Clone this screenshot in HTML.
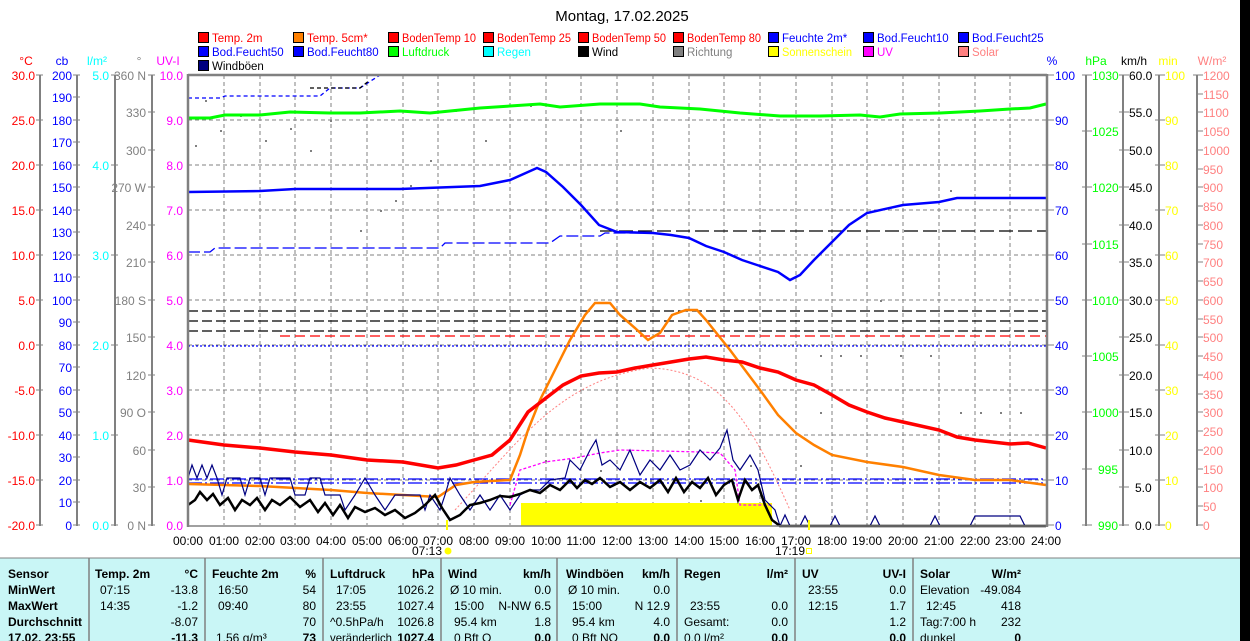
<!DOCTYPE html>
<html><head><meta charset="utf-8"><style>
html,body{margin:0;padding:0;background:#fff;width:1250px;height:641px;overflow:hidden;font-family:"Liberation Sans",Arial,sans-serif}
svg{position:absolute;left:0;top:0}
</style></head><body>
<svg width="1250" height="641" font-family="Liberation Sans, Arial, sans-serif" font-size="12">
<rect x="1240" y="0" width="10" height="641" fill="#000"/>
<text x="622" y="21" font-size="15" text-anchor="middle" fill="#000">Montag, 17.02.2025</text>
<!-- legend -->
<g font-size="11.5" textLength="0">
<rect x="198.5" y="32.5" width="10" height="10" fill="#f00" stroke="#000"/><text x="212" y="42" fill="#f00">Temp. 2m</text>
<rect x="293.5" y="32.5" width="10" height="10" fill="#ff8000" stroke="#000"/><text x="307" y="42" fill="#f00">Temp. 5cm*</text>
<rect x="388.5" y="32.5" width="10" height="10" fill="#f00" stroke="#000"/><text x="402" y="42" fill="#f00" textLength="74" lengthAdjust="spacingAndGlyphs">BodenTemp 10</text>
<rect x="483.5" y="32.5" width="10" height="10" fill="#f00" stroke="#000"/><text x="497" y="42" fill="#f00" textLength="74" lengthAdjust="spacingAndGlyphs">BodenTemp 25</text>
<rect x="578.5" y="32.5" width="10" height="10" fill="#f00" stroke="#000"/><text x="592" y="42" fill="#f00" textLength="74" lengthAdjust="spacingAndGlyphs">BodenTemp 50</text>
<rect x="673.5" y="32.5" width="10" height="10" fill="#f00" stroke="#000"/><text x="687" y="42" fill="#f00" textLength="74" lengthAdjust="spacingAndGlyphs">BodenTemp 80</text>
<rect x="768.5" y="32.5" width="10" height="10" fill="#00f" stroke="#000"/><text x="782" y="42" fill="#00f">Feuchte 2m*</text>
<rect x="863.5" y="32.5" width="10" height="10" fill="#00f" stroke="#000"/><text x="877" y="42" fill="#00f">Bod.Feucht10</text>
<rect x="958.5" y="32.5" width="10" height="10" fill="#00f" stroke="#000"/><text x="972" y="42" fill="#00f">Bod.Feucht25</text>
<rect x="198.5" y="46.5" width="10" height="10" fill="#00f" stroke="#000"/><text x="212" y="56" fill="#00f">Bod.Feucht50</text>
<rect x="293.5" y="46.5" width="10" height="10" fill="#00f" stroke="#000"/><text x="307" y="56" fill="#00f">Bod.Feucht80</text>
<rect x="388.5" y="46.5" width="10" height="10" fill="#0f0" stroke="#000"/><text x="402" y="56" fill="#0f0">Luftdruck</text>
<rect x="483.5" y="46.5" width="10" height="10" fill="#0ff" stroke="#000"/><text x="497" y="56" fill="#0ff">Regen</text>
<rect x="578.5" y="46.5" width="10" height="10" fill="#000" stroke="#000"/><text x="592" y="56" fill="#000">Wind</text>
<rect x="673.5" y="46.5" width="10" height="10" fill="#808080" stroke="#000"/><text x="687" y="56" fill="#808080">Richtung</text>
<rect x="768.5" y="46.5" width="10" height="10" fill="#ff0" stroke="#000"/><text x="782" y="56" fill="#ff0" textLength="70" lengthAdjust="spacingAndGlyphs">Sonnenschein</text>
<rect x="863.5" y="46.5" width="10" height="10" fill="#f0f" stroke="#000"/><text x="877" y="56" fill="#f0f">UV</text>
<rect x="958.5" y="46.5" width="10" height="10" fill="#ff8080" stroke="#000"/><text x="972" y="56" fill="#ff8080">Solar</text>
<rect x="198.5" y="60.5" width="10" height="10" fill="#000080" stroke="#000"/><text x="212" y="70" fill="#000">Windböen</text>
</g>
<!-- unit labels -->
<g font-size="12">
<text x="26" y="65" text-anchor="middle" fill="#f00">°C</text>
<text x="62" y="65" text-anchor="middle" fill="#00f">cb</text>
<text x="97" y="65" text-anchor="middle" fill="#0ff">l/m²</text>
<text x="139" y="65" text-anchor="middle" fill="#808080">°</text>
<text x="168" y="65" text-anchor="middle" fill="#f0f">UV-I</text>
<text x="1052" y="65" text-anchor="middle" fill="#00f">%</text>
<text x="1096" y="65" text-anchor="middle" fill="#0f0">hPa</text>
<text x="1134" y="65" text-anchor="middle" fill="#000">km/h</text>
<text x="1168" y="65" text-anchor="middle" fill="#ff0">min</text>
<text x="1212" y="65" text-anchor="middle" fill="#ff8080">W/m²</text>
</g>
<!-- axis lines -->
<g stroke="#808080" stroke-width="2">
<line x1="40" y1="75" x2="40" y2="526"/><line x1="77" y1="75" x2="77" y2="526"/><line x1="115" y1="75" x2="115" y2="526"/><line x1="152" y1="75" x2="152" y2="526"/>
<line x1="1086" y1="75" x2="1086" y2="526"/><line x1="1123" y1="75" x2="1123" y2="526"/><line x1="1159" y1="75" x2="1159" y2="526"/><line x1="1197" y1="75" x2="1197" y2="526"/>
</g>
<!-- left tick labels -->
<g font-size="12" text-anchor="end">
<g fill="#f00"><text x="35" y="80">30.0</text><text x="35" y="125">25.0</text><text x="35" y="170">20.0</text><text x="35" y="215">15.0</text><text x="35" y="260">10.0</text><text x="35" y="305">5.0</text><text x="35" y="350">0.0</text><text x="35" y="395">-5.0</text><text x="35" y="440">-10.0</text><text x="35" y="485">-15.0</text><text x="35" y="530">-20.0</text></g>
<g fill="#00f"><text x="72" y="80">200</text><text x="72" y="102">190</text><text x="72" y="125">180</text><text x="72" y="147">170</text><text x="72" y="170">160</text><text x="72" y="192">150</text><text x="72" y="215">140</text><text x="72" y="237">130</text><text x="72" y="260">120</text><text x="72" y="282">110</text><text x="72" y="305">100</text><text x="72" y="327">90</text><text x="72" y="350">80</text><text x="72" y="372">70</text><text x="72" y="395">60</text><text x="72" y="417">50</text><text x="72" y="440">40</text><text x="72" y="462">30</text><text x="72" y="485">20</text><text x="72" y="507">10</text><text x="72" y="530">0</text></g>
<g fill="#0ff"><text x="109" y="80">5.0</text><text x="109" y="170">4.0</text><text x="109" y="260">3.0</text><text x="109" y="350">2.0</text><text x="109" y="440">1.0</text><text x="109" y="530">0.0</text></g>
<g fill="#808080"><text x="146" y="80">360 N</text><text x="146" y="117">330</text><text x="146" y="155">300</text><text x="146" y="192">270 W</text><text x="146" y="230">240</text><text x="146" y="267">210</text><text x="146" y="305">180 S</text><text x="146" y="342">150</text><text x="146" y="380">120</text><text x="146" y="417">90 O</text><text x="146" y="455">60</text><text x="146" y="492">30</text><text x="146" y="530">0 N</text></g>
<g fill="#f0f"><text x="183" y="80">10.0</text><text x="183" y="125">9.0</text><text x="183" y="170">8.0</text><text x="183" y="215">7.0</text><text x="183" y="260">6.0</text><text x="183" y="305">5.0</text><text x="183" y="350">4.0</text><text x="183" y="395">3.0</text><text x="183" y="440">2.0</text><text x="183" y="485">1.0</text><text x="183" y="530">0.0</text></g>
</g>
<!-- ticks -->
<g stroke="#808080" stroke-width="1">
<path d="M36 75h7M36 120h7M36 165h7M36 210h7M36 255h7M36 300h7M36 345h7M36 390h7M36 435h7M36 480h7M36 525h7"/>
<path d="M73 75h7M73 97h7M73 120h7M73 142h7M73 165h7M73 187h7M73 210h7M73 232h7M73 255h7M73 277h7M73 300h7M73 322h7M73 345h7M73 367h7M73 390h7M73 412h7M73 435h7M73 457h7M73 480h7M73 502h7M73 525h7"/>
<path d="M111 75h7M111 165h7M111 255h7M111 345h7M111 435h7M111 525h7"/>
<path d="M148 75h7M148 112h7M148 150h7M148 187h7M148 225h7M148 262h7M148 300h7M148 337h7M148 375h7M148 412h7M148 450h7M148 487h7M148 525h7"/>
<path d="M1048 75h6M1048 120h6M1048 165h6M1048 210h6M1048 255h6M1048 300h6M1048 345h6M1048 390h6M1048 435h6M1048 480h6M1048 525h6"/>
<path d="M1082 75h10M1082 131h10M1082 187h10M1082 244h10M1082 300h10M1082 356h10M1082 412h10M1082 469h10M1082 525h10"/>
<path d="M1119 75h10M1119 112h10M1119 150h10M1119 187h10M1119 225h10M1119 262h10M1119 300h10M1119 337h10M1119 375h10M1119 412h10M1119 450h10M1119 487h10M1119 525h10"/>
<path d="M1155 75h10M1155 120h10M1155 165h10M1155 210h10M1155 255h10M1155 300h10M1155 345h10M1155 390h10M1155 435h10M1155 480h10M1155 525h10"/>
<path d="M1193 75h10M1197 94h6M1197 112h6M1197 131h6M1197 150h6M1197 169h6M1197 187h6M1197 206h6M1197 225h6M1197 244h6M1197 262h6M1197 281h6M1197 300h6M1197 319h6M1197 337h6M1197 356h6M1197 375h6M1197 394h6M1197 412h6M1197 431h6M1197 450h6M1197 469h6M1197 487h6M1197 506h6M1197 525h6"/>
</g>
<!-- right tick labels -->
<g font-size="12">
<g fill="#00f"><text x="1055" y="80">100</text><text x="1055" y="125">90</text><text x="1055" y="170">80</text><text x="1055" y="215">70</text><text x="1055" y="260">60</text><text x="1055" y="305">50</text><text x="1055" y="350">40</text><text x="1055" y="395">30</text><text x="1055" y="440">20</text><text x="1055" y="485">10</text><text x="1055" y="530">0</text></g>
<g fill="#0f0"><text x="1092" y="80">1030</text><text x="1092" y="136">1025</text><text x="1092" y="192">1020</text><text x="1092" y="249">1015</text><text x="1092" y="305">1010</text><text x="1092" y="361">1005</text><text x="1092" y="417">1000</text><text x="1098" y="474">995</text><text x="1098" y="530">990</text></g>
<g fill="#000"><text x="1129" y="80">60.0</text><text x="1129" y="117">55.0</text><text x="1129" y="155">50.0</text><text x="1129" y="192">45.0</text><text x="1129" y="230">40.0</text><text x="1129" y="267">35.0</text><text x="1129" y="305">30.0</text><text x="1129" y="342">25.0</text><text x="1129" y="380">20.0</text><text x="1129" y="417">15.0</text><text x="1129" y="455">10.0</text><text x="1135" y="492">5.0</text><text x="1135" y="530">0.0</text></g>
<g fill="#ff0"><text x="1165" y="80">100</text><text x="1165" y="125">90</text><text x="1165" y="170">80</text><text x="1165" y="215">70</text><text x="1165" y="260">60</text><text x="1165" y="305">50</text><text x="1165" y="350">40</text><text x="1165" y="395">30</text><text x="1165" y="440">20</text><text x="1165" y="485">10</text><text x="1165" y="530">0</text></g>
<g fill="#ff8080"><text x="1203" y="80">1200</text><text x="1203" y="99">1150</text><text x="1203" y="117">1100</text><text x="1203" y="136">1050</text><text x="1203" y="155">1000</text><text x="1203" y="174">950</text><text x="1203" y="192">900</text><text x="1203" y="211">850</text><text x="1203" y="230">800</text><text x="1203" y="249">750</text><text x="1203" y="267">700</text><text x="1203" y="286">650</text><text x="1203" y="305">600</text><text x="1203" y="324">550</text><text x="1203" y="342">500</text><text x="1203" y="361">450</text><text x="1203" y="380">400</text><text x="1203" y="399">350</text><text x="1203" y="417">300</text><text x="1203" y="436">250</text><text x="1203" y="455">200</text><text x="1203" y="474">150</text><text x="1203" y="492">100</text><text x="1203" y="511">50</text><text x="1203" y="530">0</text></g>
</g>
<!-- grid -->
<g stroke="#808080" stroke-width="1" stroke-dasharray="4,3">
<path d="M188 120H1046M188 165H1046M188 210H1046M188 255H1046M188 300H1046M188 345H1046M188 390H1046M188 435H1046M188 480H1046"/>
<path d="M224 75V525M260 75V525M295 75V525M331 75V525M367 75V525M403 75V525M438 75V525M474 75V525M510 75V525M546 75V525M581 75V525M617 75V525M653 75V525M689 75V525M724 75V525M760 75V525M796 75V525M832 75V525M867 75V525M903 75V525M939 75V525M975 75V525M1010 75V525"/>
</g>
<!-- dots -->
<g fill="#808080">
<rect x="205" y="100" width="2" height="2"/><rect x="195" y="145" width="2" height="2"/><rect x="220" y="130" width="2" height="2"/><rect x="240" y="115" width="2" height="2"/><rect x="265" y="140" width="2" height="2"/><rect x="290" y="128" width="2" height="2"/><rect x="310" y="150" width="2" height="2"/><rect x="330" y="120" width="2" height="2"/><rect x="380" y="210" width="2" height="2"/><rect x="395" y="200" width="2" height="2"/><rect x="410" y="185" width="2" height="2"/><rect x="360" y="230" width="2" height="2"/><rect x="430" y="160" width="2" height="2"/><rect x="455" y="110" width="2" height="2"/><rect x="485" y="140" width="2" height="2"/><rect x="545" y="460" width="2" height="2"/><rect x="600" y="470" width="2" height="2"/><rect x="650" y="480" width="2" height="2"/><rect x="700" y="500" width="2" height="2"/><rect x="750" y="465" width="2" height="2"/><rect x="820" y="355" width="2" height="2"/><rect x="840" y="355" width="2" height="2"/><rect x="860" y="355" width="2" height="2"/><rect x="880" y="300" width="2" height="2"/><rect x="900" y="355" width="2" height="2"/><rect x="930" y="355" width="2" height="2"/><rect x="960" y="412" width="2" height="2"/><rect x="980" y="412" width="2" height="2"/><rect x="1000" y="412" width="2" height="2"/><rect x="1020" y="412" width="2" height="2"/><rect x="820" y="412" width="2" height="2"/><rect x="800" y="465" width="2" height="2"/><rect x="950" y="190" width="2" height="2"/><rect x="620" y="130" width="2" height="2"/><rect x="530" y="105" width="2" height="2"/>
</g>
<rect x="521" y="503" width="251" height="23" fill="#ff0"/>
<g fill="none" stroke-width="1.3">
<path d="M188 98H220L225 96H320L330 88H360L380 75H1046" stroke="#00f" stroke-dasharray="4,3"/>
<path d="M310 88H360L370 80" stroke="#000" stroke-dasharray="4,3"/>
<path d="M188 252H210L215 248H440L445 243H550L560 236H600L605 233H650" stroke="#00f" stroke-dasharray="12,4"/>
<path d="M600 231H1046" stroke="#000" stroke-dasharray="14,5"/>
<path d="M188 311H1046M188 321H1046M188 331H1046" stroke="#000" stroke-dasharray="10,4"/>
<path d="M280 336H1046" stroke="#f00" stroke-dasharray="10,5"/>
<path d="M188 346H1046" stroke="#00f" stroke-dasharray="2,2"/>
<path d="M188 479H1046M188 483H1046" stroke="#00f" stroke-dasharray="14,3,2,3"/>
<path d="M188 75H1046" stroke="#00f" stroke-dasharray="2,2"/>
</g>
<path d="M455 510C520 440 560 380 650 368C720 370 750 420 790 510" fill="none" stroke="#ff8080" stroke-dasharray="2,2"/>
<path d="M510 505L520 470L545 462L560 460L575 458L600 453L620 450L700 452L720 453L735 470L740 505L772 505" fill="none" stroke="#f0f" stroke-dasharray="3,2" stroke-width="1.3"/>
<polyline fill="none" stroke="#0f0" stroke-width="3" points="188,118 210,118 225,115 260,115 290,112 330,113 360,113 400,111 430,113 450,111 480,108 510,106 540,104 560,107 600,104 640,104 660,107 700,109 740,113 780,116 820,116 860,115 880,117 900,114 940,113 980,111 1010,109 1030,108 1046,104"/>
<polyline fill="none" stroke="#00f" stroke-width="2.5" points="188,192 260,191 295,189 400,189 480,186 510,180 528,172 537,168 546,172 563,187 581,205 599,225 617,232 653,233 671,235 689,238 706,246 724,252 742,260 760,266 778,272 790,280 800,275 814,260 832,242 849,225 867,213 903,205 939,202 957,198 1046,198"/>
<polyline fill="none" stroke="#ff8000" stroke-width="2.5" points="188,484 260,486 331,490 367,493 403,495 438,497 456,485 474,482 510,480 520,455 528,430 540,400 555,370 570,340 585,315 595,303 610,303 620,315 635,328 648,340 660,333 672,315 686,310 697,310 706,320 718,335 730,350 745,370 760,390 778,415 796,433 814,445 832,455 867,462 903,467 939,475 975,480 1010,480 1046,485"/>
<polyline fill="none" stroke="#f00" stroke-width="3.5" points="188,440 224,445 260,448 295,452 331,455 367,460 403,462 438,468 456,465 474,460 492,455 510,440 528,412 546,398 563,385 581,376 599,373 617,372 635,368 653,365 671,362 689,359 706,357 724,360 742,362 760,368 778,372 796,380 814,385 832,395 849,405 867,412 885,418 903,422 939,430 957,437 975,440 1010,444 1028,443 1046,448"/>
<polyline fill="none" stroke="#000080" stroke-width="1.2" points="188,478 192,465 197,478 202,465 207,478 212,465 217,478 222,495 227,478 240,478 245,495 250,478 260,478 265,495 270,478 290,478 295,495 305,495 310,478 320,478 325,495 340,495 345,510 355,495 365,478 375,495 385,510 395,495 420,495 425,510 430,495 440,510 445,495 450,478 460,495 470,510 480,495 490,510 500,495 510,510 520,495 530,490 540,490 550,480 565,478 570,460 580,470 590,450 596,440 602,465 610,460 620,470 630,450 640,475 650,460 660,470 670,455 680,470 690,465 700,450 710,460 720,448 727,430 733,460 740,470 750,455 758,470 765,500 775,510 780,526 785,515 790,526 800,526 805,516 810,526 830,526 835,516 840,526 870,526 875,516 880,526 930,526 935,516 940,526 970,526 975,516 1020,516 1025,526 1046,526"/>
<polyline fill="none" stroke="#000" stroke-width="2.5" points="188,505 195,500 200,492 207,500 213,494 220,505 228,498 235,510 242,500 250,505 257,498 265,510 272,500 280,505 290,497 300,507 310,500 318,512 325,503 333,515 340,505 348,518 355,507 365,512 375,508 385,515 395,510 405,518 415,513 425,505 435,495 442,508 450,520 460,515 470,505 480,503 490,500 500,496 510,497 520,494 530,490 540,493 550,485 560,490 570,480 577,488 585,480 592,484 600,478 610,487 620,482 630,490 640,482 650,488 660,480 668,492 676,478 684,492 692,482 700,488 708,478 716,495 724,485 732,480 738,500 745,480 752,490 758,485 765,505 772,520 780,526 1046,526"/>
<path d="M188 75H1047M188 74V527M1047 74V527" stroke="#808080" stroke-width="2.5" fill="none"/>
<path d="M188 526H1047" stroke="#808080" stroke-width="1.5"/>
<g font-size="12" text-anchor="middle" fill="#000">
<text x="188" y="545">00:00</text><text x="224" y="545">01:00</text><text x="260" y="545">02:00</text><text x="295" y="545">03:00</text><text x="331" y="545">04:00</text><text x="367" y="545">05:00</text><text x="403" y="545">06:00</text><text x="438" y="545">07:00</text><text x="474" y="545">08:00</text><text x="510" y="545">09:00</text><text x="546" y="545">10:00</text><text x="581" y="545">11:00</text><text x="617" y="545">12:00</text><text x="653" y="545">13:00</text><text x="689" y="545">14:00</text><text x="724" y="545">15:00</text><text x="760" y="545">16:00</text><text x="796" y="545">17:00</text><text x="832" y="545">18:00</text><text x="867" y="545">19:00</text><text x="903" y="545">20:00</text><text x="939" y="545">21:00</text><text x="975" y="545">22:00</text><text x="1010" y="545">23:00</text><text x="1046" y="545">24:00</text>
<text x="427" y="555">07:13</text><text x="790" y="555">17:19</text>
</g>
<rect x="446" y="520" width="2" height="10" fill="#ff0"/><circle cx="448" cy="551" r="3.5" fill="#ff0"/>
<rect x="808" y="520" width="2" height="10" fill="#ff0"/><rect x="806.5" y="548.5" width="5" height="5" fill="none" stroke="#ff0"/>
<rect x="0" y="558" width="1240" height="83" fill="#c9f6f6"/>
<path d="M0 558H1240" stroke="#808080"/>
<g stroke="#808080" stroke-width="1.5"><path d="M89 558V641M205 558V641M323 558V641M441 558V641M557 558V641M677 558V641M795 558V641M913 558V641"/></g>
<g font-size="12" fill="#000">
<g font-weight="bold"><text x="8" y="578">Sensor</text><text x="8" y="594">MinWert</text><text x="8" y="610">MaxWert</text><text x="8" y="626">Durchschnitt</text><text x="8" y="642">17.02. 23:55</text>
<text x="95" y="578">Temp. 2m</text><text x="212" y="578">Feuchte 2m</text><text x="330" y="578">Luftdruck</text><text x="448" y="578">Wind</text><text x="566" y="578">Windböen</text><text x="684" y="578">Regen</text><text x="802" y="578">UV</text><text x="920" y="578">Solar</text></g>
<g text-anchor="end" font-weight="bold"><text x="198" y="578">°C</text><text x="316" y="578">%</text><text x="434" y="578">hPa</text><text x="551" y="578">km/h</text><text x="670" y="578">km/h</text><text x="788" y="578">l/m²</text><text x="906" y="578">UV-I</text><text x="1021" y="578">W/m²</text>
<text x="198" y="642">-11.3</text><text x="316" y="642">73</text><text x="434" y="642">1027.4</text><text x="551" y="642">0.0</text><text x="670" y="642">0.0</text><text x="788" y="642">0.0</text><text x="906" y="642">0.0</text><text x="1021" y="642">0</text></g>
<text x="100" y="594">07:15</text><text x="100" y="610">14:35</text>
<text x="218" y="594">16:50</text><text x="218" y="610">09:40</text><text x="216" y="642">1.56 g/m³</text>
<text x="336" y="594">17:05</text><text x="336" y="610">23:55</text><text x="330" y="626">^0.5hPa/h</text><text x="330" y="642" textLength="62" lengthAdjust="spacingAndGlyphs">veränderlich</text>
<text x="450" y="594">Ø 10 min.</text><text x="454" y="610">15:00</text><text x="454" y="626">95.4 km</text><text x="454" y="642">0 Bft O</text>
<text x="568" y="594">Ø 10 min.</text><text x="572" y="610">15:00</text><text x="572" y="626">95.4 km</text><text x="572" y="642">0 Bft NO</text>
<text x="690" y="610">23:55</text><text x="684" y="626">Gesamt:</text><text x="684" y="642">0.0 l/m²</text>
<text x="808" y="594">23:55</text><text x="808" y="610">12:15</text>
<text x="920" y="594">Elevation</text><text x="926" y="610">12:45</text><text x="920" y="626">Tag:7:00 h</text><text x="920" y="642">dunkel</text>
<g text-anchor="end">
<text x="198" y="594">-13.8</text><text x="198" y="610">-1.2</text><text x="198" y="626">-8.07</text>
<text x="316" y="594">54</text><text x="316" y="610">80</text><text x="316" y="626">70</text>
<text x="434" y="594">1026.2</text><text x="434" y="610">1027.4</text><text x="434" y="626">1026.8</text>
<text x="551" y="594">0.0</text><text x="551" y="610">N-NW 6.5</text><text x="551" y="626">1.8</text>
<text x="670" y="594">0.0</text><text x="670" y="610">N 12.9</text><text x="670" y="626">4.0</text>
<text x="788" y="610">0.0</text><text x="788" y="626">0.0</text>
<text x="906" y="594">0.0</text><text x="906" y="610">1.7</text><text x="906" y="626">1.2</text>
<text x="1021" y="594">-49.084</text><text x="1021" y="610">418</text><text x="1021" y="626">232</text>
</g>
</g>
</svg>
</body></html>
